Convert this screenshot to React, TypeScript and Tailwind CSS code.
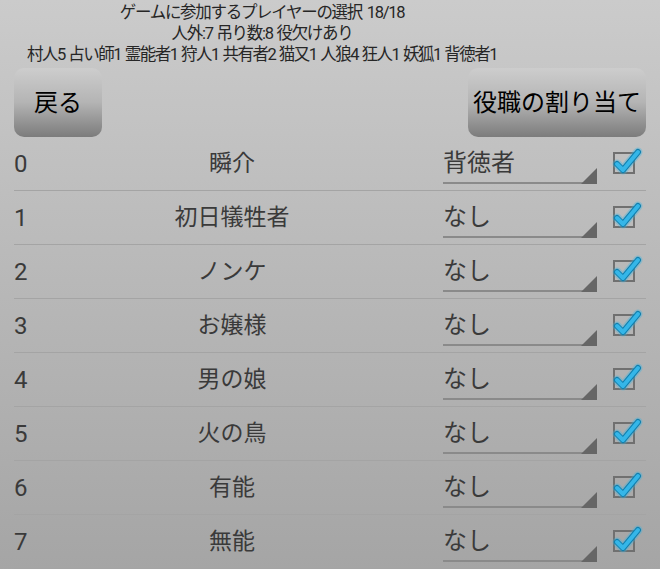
import React from "react";

const players = [
  { n: 0, name: "瞬介", role: "背徳者" },
  { n: 1, name: "初日犠牲者", role: "なし" },
  { n: 2, name: "ノンケ", role: "なし" },
  { n: 3, name: "お嬢様", role: "なし" },
  { n: 4, name: "男の娘", role: "なし" },
  { n: 5, name: "火の鳥", role: "なし" },
  { n: 6, name: "有能", role: "なし" },
  { n: 7, name: "無能", role: "なし" },
];

function Check() {
  return (
    <div className="relative w-[22px] h-[22px] border-2 border-[#707070]">
      <svg
        className="absolute left-[-2px] top-[-5px] overflow-visible"
        width="30"
        height="26"
        viewBox="0 0 30 26"
      >
        <path
          d="M4 15 L10 21 L25 3"
          fill="none"
          stroke="#33b5e5"
          strokeOpacity="0.35"
          strokeWidth="9"
          strokeLinecap="round"
          strokeLinejoin="round"
        />
        <path
          d="M4 15 L10 21 L25 3"
          fill="none"
          stroke="#0f7fae"
          strokeWidth="6"
          strokeLinecap="round"
          strokeLinejoin="round"
        />
        <path
          d="M4 15 L10 21 L25 3"
          fill="none"
          stroke="#35b6e8"
          strokeWidth="4"
          strokeLinecap="round"
          strokeLinejoin="round"
        />
      </svg>
    </div>
  );
}

function Row({ n, name, role }: { n: number; name: string; role: string }) {
  return (
    <div className="flex items-stretch h-[54px] border-b border-[#a4a4a4]">
      <div className="grid w-[429px] items-center">
        <div className="[grid-area:1/1] justify-self-start text-[24px] leading-none text-[#3a3a3a]">
          {n}
        </div>
        <div className="[grid-area:1/1] justify-self-center pl-[7px] text-[23px] leading-none text-[#3a3a3a]">
          {name}
        </div>
      </div>
      <div className="relative w-[154px] h-[47px] border-b-2 border-[#8a8a8a] flex items-center">
        <span className="text-[24px] leading-none text-[#3a3a3a] mt-[6px]">{role}</span>
        <svg className="absolute right-0 bottom-[-2px]" width="16" height="16" viewBox="0 0 16 16">
          <path d="M16 0 L16 16 L0 16 Z" fill="#666666" />
        </svg>
      </div>
      <div className="flex-1 flex items-start justify-end pt-[15px] pr-[11px]">
        <Check />
      </div>
    </div>
  );
}

export default function App() {
  return (
    <div
      className="w-[660px] h-[569px] overflow-hidden bg-gradient-to-b from-[#cbcbcb] to-[#a5a5a5] text-[#222]"
      style={{ fontFamily: 'Roboto, "Noto Sans CJK JP", sans-serif' }}
    >
      <div className="w-[524px] flex flex-col items-center text-[16.5px] leading-[21px] tracking-[-1.3px] text-[#262626] pt-[2px] whitespace-nowrap">
        <div className="[word-spacing:2px]">ゲームに参加するプレイヤーの選択 18/18</div>
        <div className="[word-spacing:1px]">人外:7 吊り数:8 役欠けあり</div>
        <div className="tracking-[-1.5px] [word-spacing:1px]">
          村人5 占い師1 霊能者1 狩人1 共有者2 猫又1 人狼4 狂人1 妖狐1 背徳者1
        </div>
      </div>
      <div className="flex justify-between px-[14px] mt-[3px]">
        <button className="w-[88px] h-[69px] rounded-[10px] bg-gradient-to-b from-[#cdcdcd] via-[#b4b4b4] to-[#7c7c7c] text-[24px] text-black leading-none">
          戻る
        </button>
        <button className="w-[178px] h-[69px] rounded-[10px] bg-gradient-to-b from-[#cdcdcd] via-[#b4b4b4] to-[#7c7c7c] text-[24px] text-black leading-none">
          役職の割り当て
        </button>
      </div>
      <div className="px-[14px]">
        {players.map((p) => (
          <Row key={p.n} {...p} />
        ))}
      </div>
    </div>
  );
}
